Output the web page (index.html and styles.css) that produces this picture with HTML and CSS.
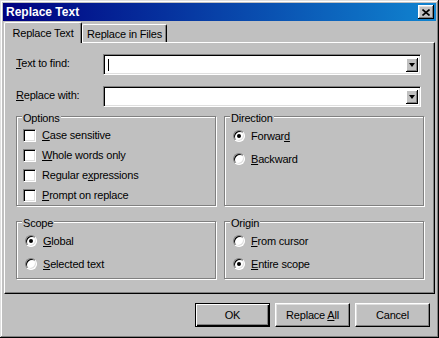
FILE: index.html
```html
<!DOCTYPE html>
<html lang="en">
<head>
    <meta charset="UTF-8">
    <title>Replace Text</title>
    <link rel="stylesheet" href="styles.css">
</head>
<body>

<div class="window">
    <div class="titlebar">
        <span class="title">Replace Text</span>
        <button class="close-btn">
            <svg width="8" height="7" viewBox="0 0 8 7">
                <path d="M0.5 0.5L7.5 6.5M7.5 0.5L0.5 6.5" stroke="#000" stroke-width="1.6" fill="none"/>
            </svg>
        </button>
    </div>

    <div class="tabs">
        <div class="tab active">Replace Text</div>
        <div class="tab">Replace in Files</div>
    </div>

    <div class="panel">
        <div class="field-row">
            <label class="field-label"><u>T</u>ext to find:</label>
            <div class="combo">
                <span class="caret"></span>
                <span class="combo-btn"><span class="arrow"></span></span>
            </div>
        </div>
        <div class="field-row">
            <label class="field-label"><u>R</u>eplace with:</label>
            <div class="combo">
                <span class="combo-btn"><span class="arrow"></span></span>
            </div>
        </div>

        <div class="groups">
            <div class="group tall">
                <div class="group-title">Options</div>
                <div class="check-row"><span class="checkbox"></span><u>C</u>ase sensitive</div>
                <div class="check-row"><span class="checkbox"></span><u>W</u>hole words only</div>
                <div class="check-row"><span class="checkbox"></span>Regular e<u>x</u>pressions</div>
                <div class="check-row"><span class="checkbox"></span><u>P</u>rompt on replace</div>
            </div>
            <div class="group tall">
                <div class="group-title">Direction</div>
                <div class="radio-list">
                    <div class="radio-row"><span class="radio checked"></span>Forwar<u>d</u></div>
                    <div class="radio-row"><span class="radio"></span><u>B</u>ackward</div>
                </div>
            </div>
            <div class="group short">
                <div class="group-title">Scope</div>
                <div class="radio-list">
                    <div class="radio-row"><span class="radio checked"></span><u>G</u>lobal</div>
                    <div class="radio-row"><span class="radio"></span><u>S</u>elected text</div>
                </div>
            </div>
            <div class="group short">
                <div class="group-title">Origin</div>
                <div class="radio-list">
                    <div class="radio-row"><span class="radio"></span><u>F</u>rom cursor</div>
                    <div class="radio-row"><span class="radio checked"></span><u>E</u>ntire scope</div>
                </div>
            </div>
        </div>
    </div>

    <div class="buttons">
        <button class="btn default">OK</button>
        <button class="btn">Replace <u>A</u>ll</button>
        <button class="btn">Cancel</button>
    </div>
</div>

</body>
</html>
```

FILE: styles.css
```css
body {
    margin: 0;
    background: #c0c0c0;
    font-family: 'Liberation Sans', Arial, sans-serif;
    font-size: 11px;
    letter-spacing: -0.2px;
    color: #000;
}

u {
    text-decoration: underline;
    text-underline-offset: 1px;
}

.window {
    width: 439px;
    height: 338px;
    box-sizing: border-box;
    padding: 3px;
    background: #c0c0c0;
    box-shadow: inset -1px -1px #000, inset 1px 1px #dfdfdf, inset -2px -2px #808080, inset 2px 2px #fff;
    display: flex;
    flex-direction: column;
}

/* Заголовок окна */
.titlebar {
    height: 18px;
    background: linear-gradient(90deg, #000080, #1084d0);
    display: flex;
    align-items: center;
    justify-content: space-between;
    padding: 0 2px 0 3px;
}

.title {
    color: #fff;
    font-weight: bold;
    font-size: 12px;
    letter-spacing: 0;
}

.close-btn {
    width: 16px;
    height: 14px;
    padding: 0;
    border: none;
    background: #c0c0c0;
    box-shadow: inset -1px -1px #000, inset 1px 1px #fff, inset -2px -2px #808080, inset 2px 2px #dfdfdf;
    display: flex;
    align-items: center;
    justify-content: center;
}

/* Вкладки */
.tabs {
    display: flex;
    align-items: flex-end;
    height: 21px;
    margin: 1px 0 -1px 1px;
}

.tab {
    height: 18px;
    box-sizing: border-box;
    margin-bottom: 1px;
    padding: 0 2px;
    white-space: nowrap;
    border-top: 1px solid #fff;
    border-left: 1px solid #fff;
    border-right: 1px solid #000;
    border-radius: 2px 2px 0 0;
    box-shadow: inset -1px 0 #808080;
    display: flex;
    align-items: center;
    justify-content: center;
    width: 85px;
}

.tab.active {
    width: 78px;
    height: 21px;
    margin-bottom: 0;
    padding-bottom: 1px;
    background: #c0c0c0;
    position: relative;
    z-index: 1;
}

.panel {
    height: 252px;
    box-sizing: border-box;
    margin: 0 1px;
    padding: 11px 11px 0 11px;
    border: 1px solid;
    border-color: #fff #000 #000 #fff;
    box-shadow: inset -1px -1px #808080;
}

.field-row {
    display: flex;
    align-items: center;
    height: 21px;
    margin-bottom: 11px;
}

.field-label {
    width: 87px;
    margin-top: -3px;
}

.combo {
    flex: 1;
    height: 21px;
    box-sizing: border-box;
    margin-right: 2px;
    background: #fff;
    border: 1px solid;
    border-color: #808080 #fff #fff #808080;
    box-shadow: inset 1px 1px #000, inset -1px -1px #dfdfdf;
    display: flex;
    align-items: center;
    justify-content: space-between;
    padding: 2px 2px 2px 4px;
}

.caret {
    width: 1px;
    height: 12px;
    background: #000;
}

.combo-btn {
    margin-left: auto;
    width: 12px;
    height: 14px;
    box-sizing: border-box;
    background: #c0c0c0;
    box-shadow: inset -1px -1px #000, inset 1px 1px #fff, inset -2px -2px #808080;
    display: flex;
    align-items: center;
    justify-content: center;
}

.arrow {
    width: 0;
    height: 0;
    border-left: 3px solid transparent;
    border-right: 3px solid transparent;
    border-top: 4px solid #000;
    margin: 1px 1px 0 0;
}

/* Группы */
.groups {
    display: grid;
    grid-template-columns: 200px 200px;
    column-gap: 8px;
    row-gap: 15px;
    margin-top: -2px;
}

.group {
    box-sizing: border-box;
    border: 1px solid #808080;
    box-shadow: 1px 1px 0 #fff, inset 1px 1px 0 #fff;
    padding: 0 6px;
}

.group.tall {
    height: 90px;
}

.group.short {
    height: 58px;
}

.group-title {
    width: fit-content;
    margin: -5px 0 0 -1px;
    padding: 0 1px;
    height: 13px;
    line-height: 13px;
    background: #c0c0c0;
}

.check-row,
.radio-row {
    height: 20px;
    display: flex;
    align-items: center;
}

.checkbox {
    width: 13px;
    height: 13px;
    box-sizing: border-box;
    margin-right: 6px;
    background: #fff;
    border: 1px solid;
    border-color: #808080 #fff #fff #808080;
    box-shadow: inset 1px 1px #000, inset -1px -1px #dfdfdf;
}

.radio-list {
    display: flex;
    flex-direction: column;
    gap: 3px;
    margin-top: 1px;
}

.radio {
    width: 12px;
    height: 12px;
    box-sizing: border-box;
    margin: 0 6px 0 2px;
    border-radius: 50%;
    background: #fff;
    border: 1px solid;
    border-color: #808080 #fff #fff #808080;
    box-shadow: inset 1px 1px #000, inset -1px -1px #dfdfdf;
    display: flex;
    align-items: center;
    justify-content: center;
}

.radio.checked::after {
    content: "";
    width: 4px;
    height: 4px;
    border-radius: 50%;
    background: #000;
}

/* Кнопки */
.buttons {
    display: flex;
    justify-content: flex-end;
    gap: 5px;
    margin-top: 9px;
    padding-right: 6px;
}

.btn {
    width: 75px;
    height: 24px;
    padding: 0;
    font-family: inherit;
    font-size: 11px;
    letter-spacing: -0.2px;
    color: #000;
    background: #c0c0c0;
    border: 1px solid;
    border-color: #fff #000 #000 #fff;
    box-shadow: inset -1px -1px #808080, inset 1px 1px #dfdfdf;
}

.btn.default {
    border-color: #000;
    box-shadow: inset 1px 1px #fff, inset -1px -1px #000, inset -2px -2px #808080;
}
```
